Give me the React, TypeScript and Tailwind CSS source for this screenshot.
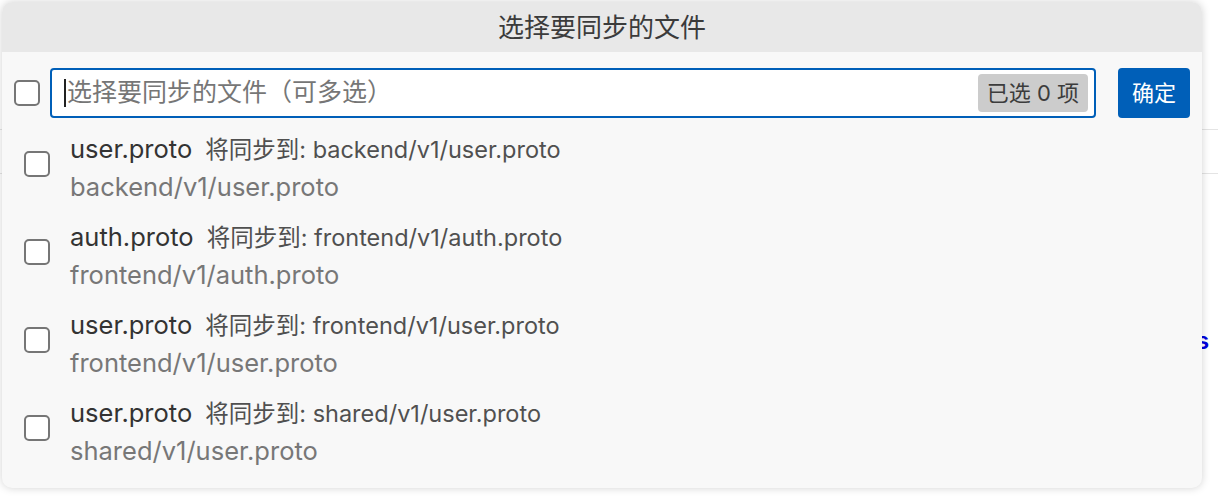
import React from "react";

const font = '"Inter", "Noto Sans CJK SC", sans-serif';

type Item = { label: string; target: string };

const items: Item[] = [
  { label: "user.proto", target: "backend/v1/user.proto" },
  { label: "auth.proto", target: "frontend/v1/auth.proto" },
  { label: "user.proto", target: "frontend/v1/user.proto" },
  { label: "user.proto", target: "shared/v1/user.proto" },
];

function Box({ className = "" }: { className?: string }) {
  return <div className={"w-[26px] h-[26px] rounded-[5px] border-2 border-[#767676] bg-white shrink-0 " + className} />;
}

export default function App() {
  return (
    <div className="relative w-[1218px] h-[500px] bg-[#ffffff] overflow-hidden" style={{ fontFamily: font }}>
      {/* page content behind the picker */}
      <div className="absolute left-0 right-0 top-[129px] h-px bg-[#e4e4e4]" />
      <div className="absolute left-0 right-0 top-[173px] h-px bg-[#e4e4e4]" />
      <div className="absolute left-[1196px] top-[326px] text-[24px] leading-[30px] text-[#0000dd] font-semibold">s</div>

      {/* quick pick */}
      <div className="absolute left-[2px] top-[2px] w-[1200px] h-[486px] rounded-[10px] bg-[#f8f8f8] shadow-[0_0_8px_rgba(0,0,0,0.18)] overflow-hidden flex flex-col">
        <div className="h-[50px] bg-[#e8e8e8] flex items-center justify-center text-[26px] text-[#3b3b3b]">
          选择要同步的文件
        </div>

        <div className="flex items-center pt-[16px] pl-[12px] pr-[12px]">
          <Box />
          <div className="ml-[10px] w-[1046px] h-[50px] border-2 border-[#005fb8] rounded-[4px] bg-white flex items-center pl-[12px] pr-[6px]">
            <span className="w-[2px] h-[28px] bg-[#222]" />
            <span className="ml-px text-[25px] text-[#767676] flex-1">选择要同步的文件（可多选）</span>
            <span className="h-[38px] px-[9px] rounded-[4px] bg-[#cccccc] text-[22px] text-[#3c3c3c] flex items-center">已选 0 项</span>
          </div>
          <button className="ml-[22px] w-[72px] h-[50px] rounded-[4px] bg-[#005fb8] text-white text-[22px] flex items-center justify-center">
            确定
          </button>
        </div>

        <div className="flex flex-col pt-[5px]">
          {items.map((it, i) => (
            <div key={i} className="h-[88px] flex items-start pl-[22px]">
              <Box className="mt-[28px]" />
              <div className="ml-[20px] pt-[8px] flex flex-col">
                <div className="h-[37px] flex items-center whitespace-nowrap">
                  <span className="text-[25.5px] text-[#333333]">{it.label}</span>
                  <span className="ml-[13px] text-[23.5px] text-[#505050]">将同步到: {it.target}</span>
                </div>
                <div className="h-[39px] flex items-center text-[25.5px] text-[#777777] whitespace-nowrap">{it.target}</div>
              </div>
            </div>
          ))}
        </div>
      </div>
    </div>
  );
}
